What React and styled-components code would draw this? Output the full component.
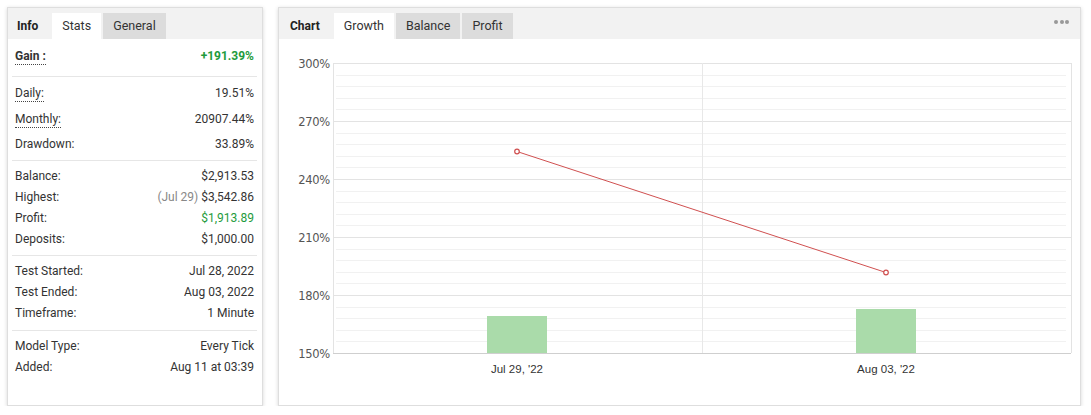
import React from "react";
import styled, { createGlobalStyle } from "styled-components";

const GlobalStyle = createGlobalStyle`
  body {
    margin: 0;
    background: #ffffff;
    font-family: Roboto, "Liberation Sans", Arial, sans-serif;
    color: #333;
  }
`;

const stats = [
  { rows: [{ label: "Gain :", value: "+191.39%", bold: true, green: true, dotted: true }], pad: "7px 0 9px" },
  {
    rows: [
      { label: "Daily:", value: "19.51%", dotted: true, tall: true },
      { label: "Monthly:", value: "20907.44%", dotted: true, tall: true },
      { label: "Drawdown:", value: "33.89%" },
    ],
    pad: "6px 0 5px",
  },
  {
    rows: [
      { label: "Balance:", value: "$2,913.53" },
      { label: "Highest:", value: "$3,542.86", note: "(Jul 29)" },
      { label: "Profit:", value: "$1,913.89", green: true },
      { label: "Deposits:", value: "$1,000.00" },
    ],
    pad: "5px 0 5px",
  },
  {
    rows: [
      { label: "Test Started:", value: "Jul 28, 2022" },
      { label: "Test Ended:", value: "Aug 03, 2022" },
      { label: "Timeframe:", value: "1 Minute" },
    ],
    pad: "5px 0 6px",
  },
  {
    rows: [
      { label: "Model Type:", value: "Every Tick" },
      { label: "Added:", value: "Aug 11 at 03:39" },
    ],
    pad: "5px 0 5px",
  },
];

const App = () => {
  return (
    <>
      <GlobalStyle />
      <Page>
        <Panel $width={256}>
          <Header>
            <HeaderTitle>Info</HeaderTitle>
            <Tabs>
              <Tab $active>Stats</Tab>
              <Tab>General</Tab>
            </Tabs>
          </Header>
          <StatsBody>
            {stats.map((section, i) => (
              <Section key={i} $pad={section.pad}>
                {section.rows.map((r) => (
                  <Row key={r.label} $tall={r.tall}>
                    <Label $bold={r.bold} $dotted={r.dotted}>{r.label}</Label>
                    <Value $bold={r.bold} $green={r.green}>
                      {r.note && <Note>{r.note} </Note>}
                      {r.value}
                    </Value>
                  </Row>
                ))}
              </Section>
            ))}
          </StatsBody>
        </Panel>

        <Panel $width={803}>
          <Header>
            <HeaderTitle $pad={11}>Chart</HeaderTitle>
            <Tabs>
              <Tab $active>Growth</Tab>
              <Tab>Balance</Tab>
              <Tab>Profit</Tab>
            </Tabs>
            <More>
              <Dot />
              <Dot />
              <Dot />
            </More>
          </Header>
          <GrowthChart />
        </Panel>
      </Page>
    </>
  );
};

// plot geometry, in coordinates of the chart svg (which starts under the header)
const LEFT = 54;
const RIGHT = 792;
const TOP = 24;
const STEP = 58;
const BOTTOM = TOP + 5 * STEP;

const GrowthChart = () => {
  const labels = ["300%", "270%", "240%", "210%", "180%", "150%"];
  const minor = [];
  for (let i = 0; i < 5; i++) {
    for (let j = 1; j < 5; j++) minor.push(Math.round(TOP + i * STEP + (j * STEP) / 5) + 0.5);
  }
  return (
    <ChartSvg width="801" height="365" viewBox="0 0 801 365">
      {minor.map((y) => (
        <line key={y} x1={LEFT + 3} x2={RIGHT - 5} y1={y} y2={y} stroke="#f1f1f1" strokeWidth="1" />
      ))}
      {labels.map((l, i) => {
        const y = TOP + i * STEP + 0.5;
        return (
          <g key={l}>
            <line x1={LEFT} x2={RIGHT} y1={y} y2={y} stroke={i === 5 ? "#cfcfcf" : "#e3e3e3"} strokeWidth="1" />
            <text x={LEFT - 3} y={y + 4} textAnchor="end" fontSize="11.5" fill="#555" fontFamily="'DejaVu Sans', Verdana, sans-serif" letterSpacing="-0.3">
              {l}
            </text>
          </g>
        );
      })}
      <line x1={LEFT + 0.5} x2={LEFT + 0.5} y1={TOP} y2={BOTTOM} stroke="#e3e3e3" />
      <line x1={423.5} x2={423.5} y1={TOP} y2={BOTTOM} stroke="#e8e8e8" />
      <line x1={RIGHT + 0.5} x2={RIGHT + 0.5} y1={TOP} y2={BOTTOM} stroke="#e3e3e3" />
      <rect x="208" y="277" width="60" height="37" fill="#aadbaa" />
      <rect x="577" y="270" width="60" height="44" fill="#aadbaa" />
      <line x1="238" y1="112.5" x2="607" y2="233.5" stroke="#d05050" strokeWidth="1" />
      <circle cx="238" cy="112.5" r="2.3" fill="#fff" stroke="#d05050" strokeWidth="1.2" />
      <circle cx="607" cy="233.5" r="2.3" fill="#fff" stroke="#d05050" strokeWidth="1.2" />
      <text x="238" y="334" textAnchor="middle" fontSize="11.5" fill="#333" fontFamily="'Liberation Sans', Arial, sans-serif">
        Jul 29, '22
      </text>
      <text x="607" y="334" textAnchor="middle" fontSize="11.5" fill="#333" fontFamily="'Liberation Sans', Arial, sans-serif">
        Aug 03, '22
      </text>
    </ChartSvg>
  );
};

export default App;

const Page = styled.div`
  display: flex;
  gap: 15px;
  padding: 7px 0 0 7px;
`;

const Panel = styled.div`
  width: ${(p) => p.$width}px;
  height: 399px;
  box-sizing: border-box;
  border: 1px solid #dedede;
  box-shadow: 0 1px 4px rgba(0, 0, 0, 0.16);
  background: #fff;
  display: flex;
  flex-direction: column;
`;

const Header = styled.div`
  height: 31px;
  flex-shrink: 0;
  background: #f2f2f2;
  display: flex;
  align-items: flex-end;
  position: relative;
`;

const HeaderTitle = styled.div`
  font-size: 12px;
  font-weight: bold;
  color: #222;
  padding: 0 14px 0 ${(p) => p.$pad || 9}px;
  height: 26px;
  line-height: 26px;
`;

const Tabs = styled.div`
  display: flex;
  gap: 2px;
`;

const Tab = styled.div`
  height: 26px;
  line-height: 26px;
  padding: 0 10px;
  font-size: 12.5px;
  color: #333;
  background: ${(p) => (p.$active ? "#fff" : "#dcdcdc")};
`;

const More = styled.div`
  position: absolute;
  right: 11px;
  top: 12px;
  display: flex;
  gap: 1.5px;
`;

const Dot = styled.span`
  width: 4px;
  height: 4px;
  border-radius: 50%;
  background: #999;
`;

const StatsBody = styled.div`
  padding: 0 5px 0 4px;
`;

const Section = styled.div`
  padding: ${(p) => p.$pad};
  border-bottom: 1px solid #e6e6e6;
  &:last-child {
    border-bottom: none;
  }
`;

const Row = styled.div`
  display: flex;
  justify-content: space-between;
  align-items: flex-start;
  height: ${(p) => (p.$tall ? 25.5 : 21)}px;
  line-height: 21px;
  font-size: 12px;
  padding: 0 3px 0 3px;
`;

const Label = styled.span`
  color: #333;
  font-weight: ${(p) => (p.$bold ? "bold" : "normal")};
  line-height: ${(p) => (p.$dotted ? "16px" : "21px")};
  margin-top: ${(p) => (p.$dotted ? "2px" : "0")};
  border-bottom: ${(p) => (p.$dotted ? "1px dotted #444" : "none")};
`;

const Value = styled.span`
  color: ${(p) => (p.$green ? "#1e9b3c" : "#333")};
  font-weight: ${(p) => (p.$bold ? "bold" : "normal")};
`;

const Note = styled.span`
  color: #888;
`;

const ChartSvg = styled.svg`
  display: block;
`;
